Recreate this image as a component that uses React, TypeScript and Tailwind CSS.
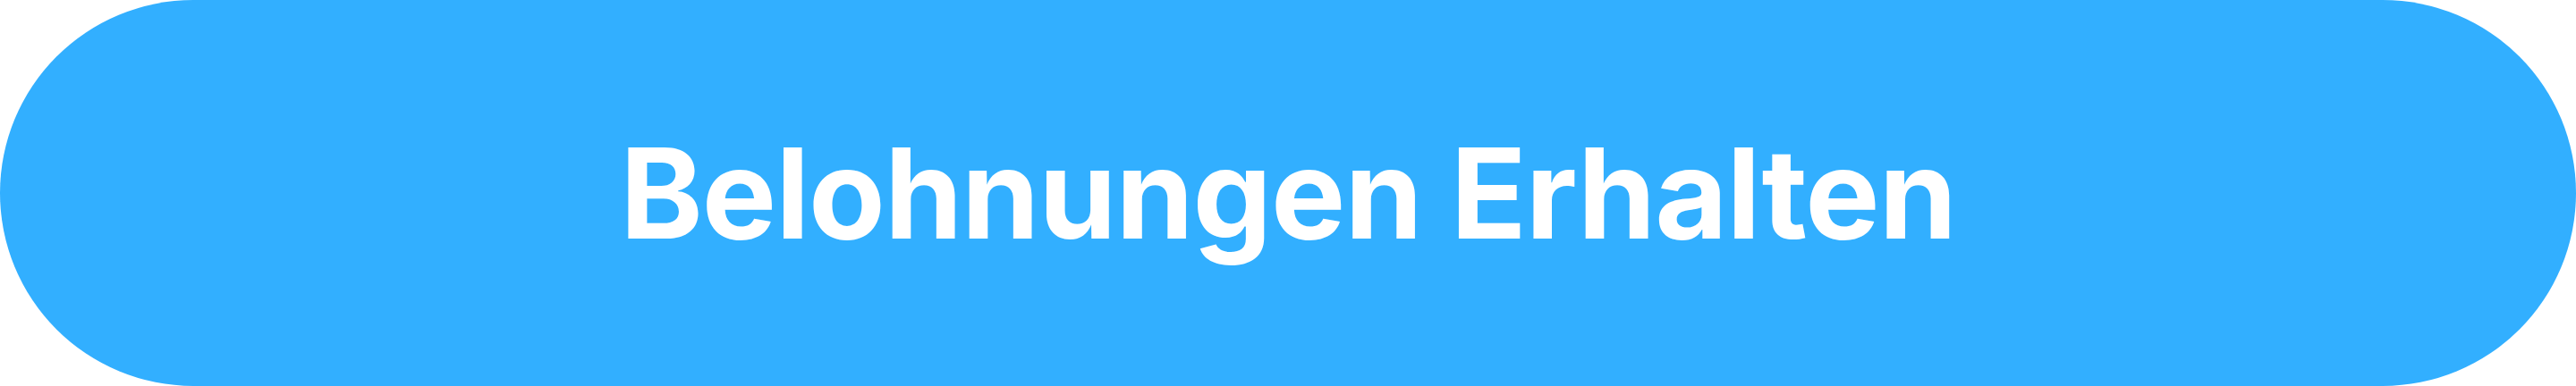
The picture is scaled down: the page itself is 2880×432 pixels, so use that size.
export default function App() {
  return (
    <div className="w-[2880px] h-[432px] bg-white">
      <button
        type="button"
        className="w-full h-full rounded-full bg-[#32afff] flex items-center justify-center"
      >
        <span className="text-white text-[140px] leading-none font-bold tracking-[-1px] font-['Inter',sans-serif]">
          Belohnungen Erhalten
        </span>
      </button>
    </div>
  );
}
